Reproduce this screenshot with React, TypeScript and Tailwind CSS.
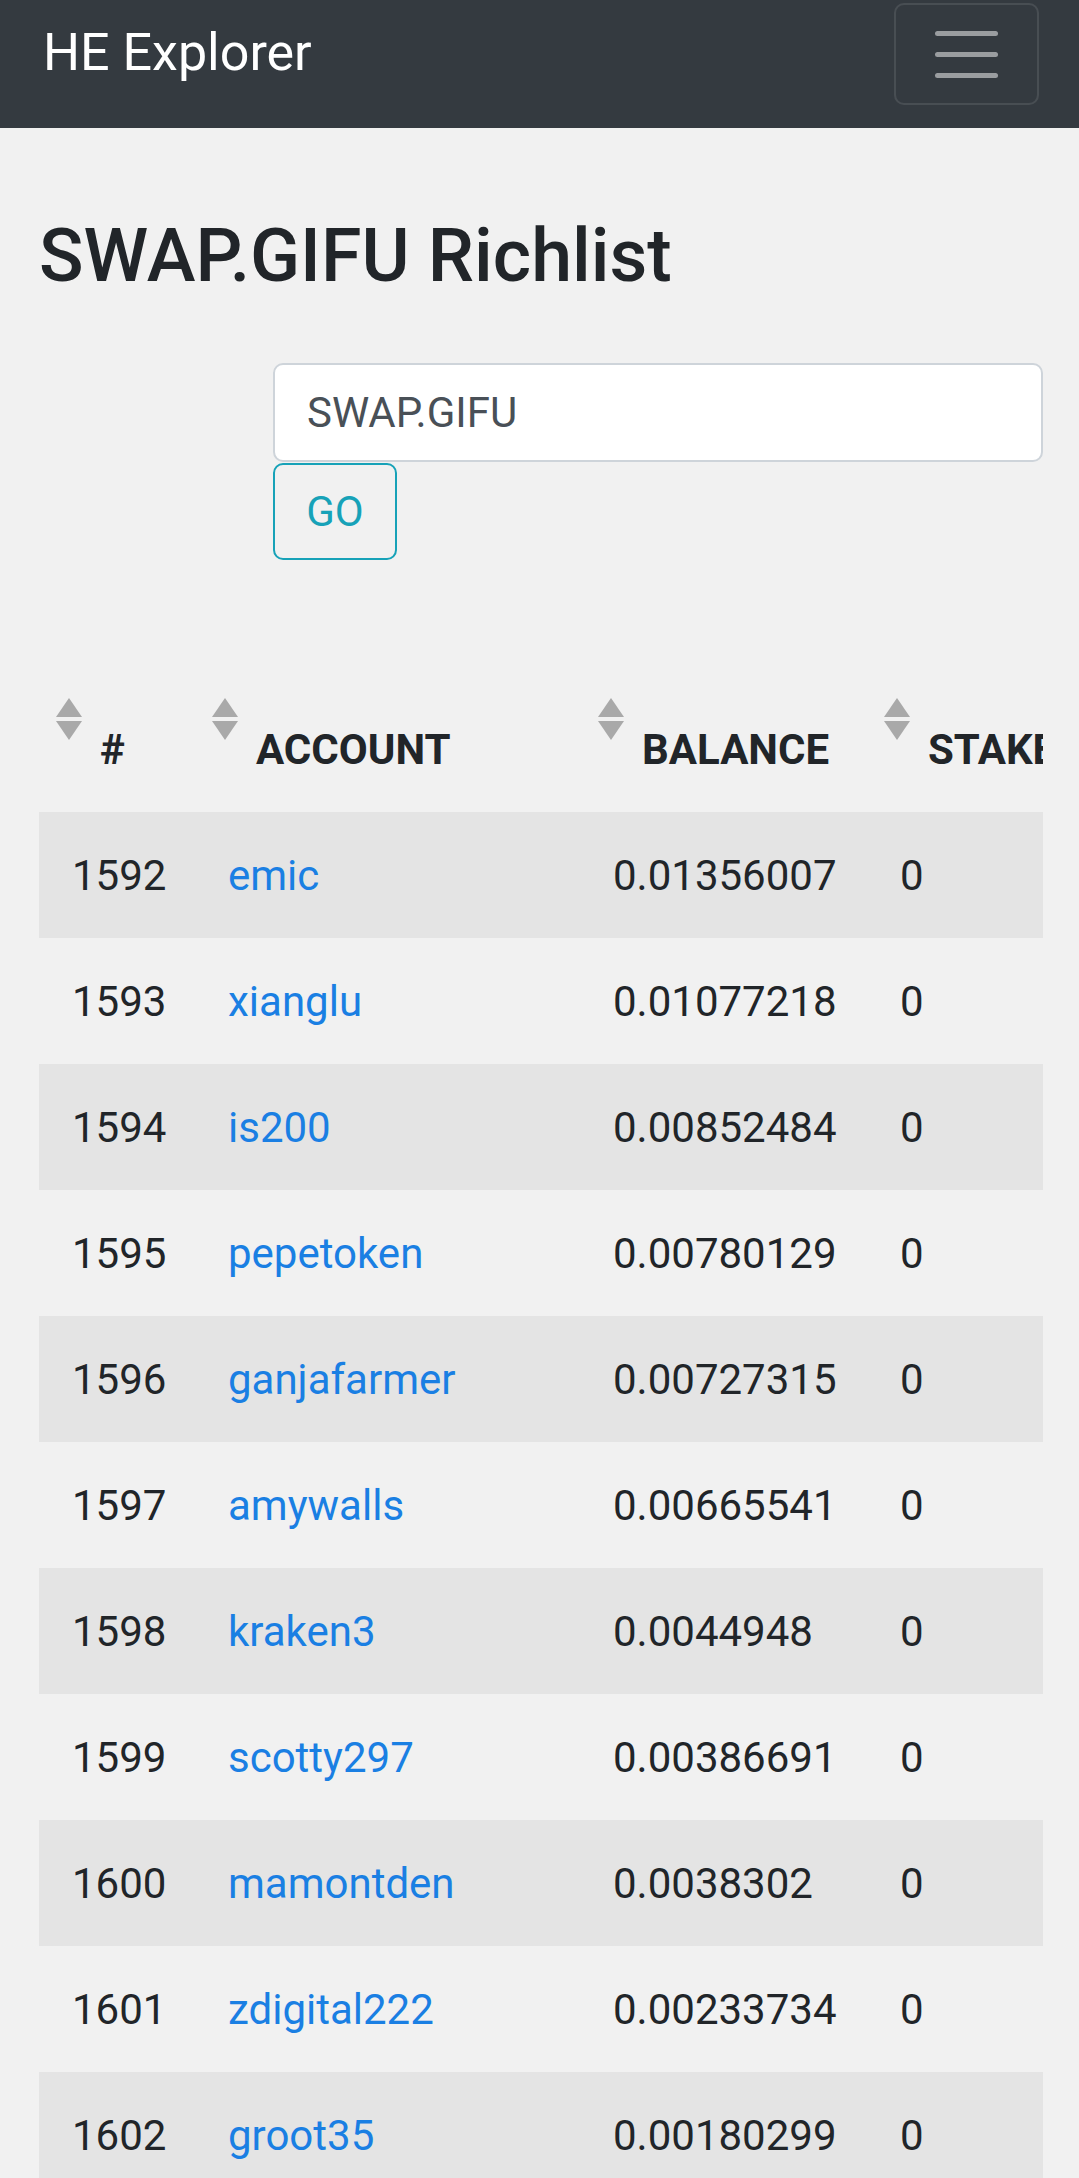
import React from "react";

const rows = [
  { rank: 1592, account: "emic", balance: "0.01356007", stake: "0" },
  { rank: 1593, account: "xianglu", balance: "0.01077218", stake: "0" },
  { rank: 1594, account: "is200", balance: "0.00852484", stake: "0" },
  { rank: 1595, account: "pepetoken", balance: "0.00780129", stake: "0" },
  { rank: 1596, account: "ganjafarmer", balance: "0.00727315", stake: "0" },
  { rank: 1597, account: "amywalls", balance: "0.00665541", stake: "0" },
  { rank: 1598, account: "kraken3", balance: "0.0044948", stake: "0" },
  { rank: 1599, account: "scotty297", balance: "0.00386691", stake: "0" },
  { rank: 1600, account: "mamontden", balance: "0.0038302", stake: "0" },
  { rank: 1601, account: "zdigital222", balance: "0.00233734", stake: "0" },
  { rank: 1602, account: "groot35", balance: "0.00180299", stake: "0" },
];

const headers = [
  { label: "#", width: "w-[156px]" },
  { label: "ACCOUNT", width: "w-[386px]" },
  { label: "BALANCE", width: "w-[286px]" },
  { label: "STAKE", width: "w-[300px]" },
];

const SortArrows = () => (
  <svg
    className="absolute left-[16px] top-[11px]"
    width="28"
    height="42"
    viewBox="0 0 28 42"
  >
    <polygon points="14,0 27,19 1,19" fill="#a9a9a9" />
    <polygon points="1,23 27,23 14,42" fill="#a9a9a9" />
  </svg>
);

export default function App() {
  return (
    <div className="min-h-screen bg-[#f1f1f1] font-['Roboto','Liberation_Sans',sans-serif] text-[#212529]">
      <nav className="flex h-[128px] items-start justify-between bg-[#343a40] pl-[43px] pr-[40px]">
        <a className="mt-[27px] text-[52px] leading-none text-white">HE Explorer</a>
        <button className="mt-[3px] flex h-[102px] w-[145px] flex-col items-center justify-center gap-[16px] rounded-[10px] border-2 border-white/10">
          <span className="h-[5px] w-[63px] rounded-full bg-[#9a9da0]"></span>
          <span className="h-[5px] w-[63px] rounded-full bg-[#9a9da0]"></span>
          <span className="h-[5px] w-[63px] rounded-full bg-[#9a9da0]"></span>
        </button>
      </nav>

      <main className="pl-[39px] pr-[36px]">
        <h2 className="pt-[84px] text-[73.5px] font-medium leading-[1.2]">
          SWAP.GIFU Richlist
        </h2>

        <div className="ml-[234px] mt-[63px] flex flex-col gap-[1px]">
          <input
            readOnly
            value="SWAP.GIFU"
            className="h-[99px] w-full rounded-[10px] border-2 border-[#ced4da] bg-white px-[32px] text-[42px] text-[#495057] outline-none"
          />
          <button className="flex h-[97px] w-[124px] items-center justify-center rounded-[10px] border-2 border-[#17a2b8] text-[42px] text-[#17a2b8]">
            GO
          </button>
        </div>

        <div className="mt-[127px] w-[1004px] overflow-hidden">
          <table className="w-[1128px] table-fixed border-collapse text-[42px]">
            <thead>
              <tr className="h-[125px]">
                {headers.map((h) => (
                  <th
                    key={h.label}
                    className={`relative ${h.width} whitespace-nowrap pb-[31px] pl-[61px] text-left align-bottom font-bold leading-[63px]`}
                  >
                    <SortArrows />
                    {h.label}
                  </th>
                ))}
              </tr>
            </thead>
            <tbody>
              {rows.map((r, i) => (
                <tr
                  key={r.rank}
                  className={`h-[126px] ${i % 2 === 0 ? "bg-[#e4e4e4]" : "bg-[#f1f1f1]"}`}
                >
                  <td className="pl-[33px] align-middle leading-[63px]">{r.rank}</td>
                  <td className="pl-[33px] align-middle leading-[63px]">
                    <a className="text-[#1a7fe3]">{r.account}</a>
                  </td>
                  <td className="pl-[32px] align-middle leading-[63px]">{r.balance}</td>
                  <td className="pl-[33px] align-middle leading-[63px]">{r.stake}</td>
                </tr>
              ))}
            </tbody>
          </table>
        </div>
      </main>
    </div>
  );
}
